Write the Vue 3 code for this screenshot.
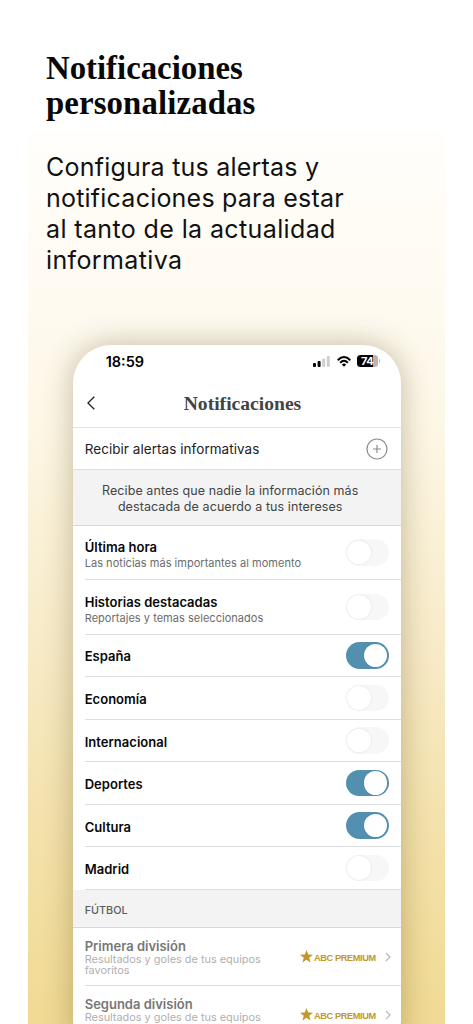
<script setup>
const topics = [
  { title: 'Última hora', sub: 'Las noticias más importantes al momento', on: false },
  { title: 'Historias destacadas', sub: 'Reportajes y temas seleccionados', on: false },
  { title: 'España', on: true },
  { title: 'Economía', on: false },
  { title: 'Internacional', on: false },
  { title: 'Deportes', on: true },
  { title: 'Cultura', on: true },
  { title: 'Madrid', on: false },
]
const leagues = ['Primera división', 'Segunda división']
</script>

<template>
  <main class="page">
    <section class="panel">
      <h1>Notificaciones<br><span class="second">personalizadas</span></h1>
      <p class="lead">Configura tus alertas y<br>notificaciones para estar<br><span class="wide">al tanto de la actualidad</span><br><span class="wide">informativa</span></p>

      <div class="phone">
        <div class="status">
          <span class="time">18:59</span>
          <svg class="signal" viewBox="0 0 17 11">
            <rect x="0" y="7" width="3" height="4" rx="1" fill="#000" />
            <rect x="4.6" y="5" width="3" height="6" rx="1" fill="#000" />
            <rect x="9.2" y="2.5" width="3" height="8.500" rx="1" fill="#cfcfcf" />
            <rect x="13.8" y="0" width="3" height="11" rx="1" fill="#cfcfcf" />
          </svg>
          <svg class="wifi" viewBox="0 0 14 11">
            <g fill="none" stroke="#000" stroke-width="1.9">
              <path d="M.7 4.200Q7-2 13.300 4.200" />
              <path d="M3.100 6.700Q7 3 10.900 6.700" />
            </g>
            <path d="M4.800 8.400Q7 6.600 9.200 8.400L7 10.700Z" />
          </svg>
          <div class="battery"><span>74</span></div>
          <i class="nub"></i>
        </div>

        <header class="bar">
          <svg class="back" viewBox="0 0 8 14"><path d="M7.300.8.9 7l6.400 6.200" /></svg>
          <h2>Notificaciones</h2>
        </header>

        <div class="receive">
          <span>Recibir alertas informativas</span>
          <svg class="plus" viewBox="0 0 22 22">
            <circle cx="11" cy="11" r="10" />
            <path d="M11 7v8M7 11h8" />
          </svg>
        </div>

        <p class="info">Recibe antes que nadie la información más<br>destacada de acuerdo a tus intereses</p>

        <div v-for="t in topics" :key="t.title" class="topic" :class="{ tall: t.sub }">
          <div>
            <div class="name">{{ t.title }}</div>
            <div v-if="t.sub" class="sub">{{ t.sub }}</div>
          </div>
          <span class="toggle" :class="{ on: t.on }"><i></i></span>
        </div>

        <div class="section">FÚTBOL</div>

        <div v-for="l in leagues" :key="l" class="league">
          <div class="text">
            <div class="lname">{{ l }}</div>
            <div class="lsub">Resultados y goles de tus equipos<br>favoritos</div>
          </div>
          <svg class="star" viewBox="0 0 24 24"><path d="M12 0l3.200 8.300 8.800.4-6.900 5.600 2.400 8.700L12 18.100 4.500 23l2.400-8.700L0 8.700l8.800-.4z" /></svg>
          <span class="premium">ABC PREMIUM</span>
          <svg class="go" viewBox="0 0 6 10"><path d="M1 1l4 4-4 4" /></svg>
        </div>
      </div>
    </section>
  </main>
</template>

<style>
body { background: #fff; }
</style>

<style scoped>
* { box-sizing: border-box; }
h1, h2, p { margin: 0; }
svg { display: block; flex: none; }
.page {
  width: 473px;
  height: 1024px;
  overflow: hidden;
  padding: 0 28px;
  background: #fff;
  font-family: Inter, "Liberation Sans", sans-serif;
}
.panel {
  height: 1024px;
  overflow: hidden;
  padding-top: 51px;
  background: linear-gradient(180deg, #fff 0, #fff 130px, #fffefb 131px, #fffbf3 270px, #fdf7e6 420px, #f8eccb 620px, #f4e2ac 820px, #f0da93 1024px);
}
h1 {
  margin-left: 18px;
  font: 700 32.800px/35px "Liberation Serif", serif;
  color: #080808;
}
.second { letter-spacing: .12px; }
.lead {
  margin: 31px 0 0 18px;
  font-size: 25px;
  line-height: 31px;
  letter-spacing: .22px;
  color: #111;
}
.wide { letter-spacing: .38px; }
.phone {
  width: 328px;
  height: 712px;
  margin: 68.500px 0 0 44.700px;
  border-radius: 38px;
  overflow: hidden;
  background: #fff;
  box-shadow: 0 0 30px rgba(70, 55, 10, .32);
}
.status {
  display: flex;
  align-items: center;
  height: 33px;
  padding-left: 33px;
}
.time { width: 207.500px; font-size: 14.500px; font-weight: 600; }
.signal { width: 17px; height: 11px; }
.wifi { width: 14px; height: 11px; margin-left: 6.500px; }
.battery {
  width: 21px;
  height: 12px;
  margin-left: 6px;
  border-radius: 3.500px;
  background: linear-gradient(90deg, #000 75%, #b5b5b5 75%);
  color: #fff;
  font-size: 11px;
  font-weight: 700;
  line-height: 12px;
  text-align: center;
  letter-spacing: -.3px;
}
.nub { width: 1.500px; height: 4px; margin-left: 1px; border-radius: 0 2px 2px 0; background: #b5b5b5; }
.bar {
  display: flex;
  align-items: center;
  height: 50.200px;
  padding: 2px 0 0 14.500px;
  border-bottom: 1px solid #e4e4e4;
}
.back { width: 8px; height: 14px; margin-top: -1px; fill: none; stroke: #222; stroke-width: 1.400; }
h2 {
  margin: 2px 0 0 88.500px;
  font: 700 19.600px/22px "Liberation Serif", serif;
  color: #444;
}
.receive {
  display: flex;
  align-items: center;
  justify-content: space-between;
  height: 42px;
  padding: 1px 13px 0 12px;
  border-bottom: 1px solid #dedede;
  font-size: 13.500px;
  letter-spacing: .05px;
  color: #222;
}
.plus { width: 22px; height: 22px; fill: none; stroke: #8c8c8c; stroke-width: 1.200; }
.info {
  height: 56px;
  padding: 13.200px 13px 0 0;
  border-bottom: 1px solid #d8d8d8;
  background: #f3f3f3;
  font-size: 12.500px;
  letter-spacing: .08px;
  line-height: 16px;
  text-align: center;
  color: #444;
}
.topic {
  display: flex;
  align-items: center;
  justify-content: space-between;
  height: 42.550px;
  margin-left: 12px;
  padding-right: 12px;
  border-bottom: 1px solid #dedede;
}
.tall { height: 54.500px; }
.name { padding-top: 2px; font-size: 13px; line-height: 16px; font-weight: 600; letter-spacing: .03px; color: #080808; }
.tall .name { padding-top: 6px; }
.sub { font-size: 11px; line-height: 16px; letter-spacing: .03px; color: #6b6b6b; }
.toggle {
  display: flex;
  width: 43px;
  height: 26.500px;
  padding: 1.500px;
  border-radius: 14px;
  background: #f7f7f7;
}
.toggle i {
  width: 23.500px;
  height: 23.500px;
  border-radius: 50%;
  background: #fff;
  box-shadow: 0 0 2px rgba(0, 0, 0, .12);
}
.toggle.on { justify-content: flex-end; background: #5390b0; }
.section {
  height: 38.500px;
  padding-left: 12px;
  border-bottom: 1px solid #d8d8d8;
  background: #f3f3f3;
  font-size: 10.800px;
  line-height: 41px;
  font-weight: 500;
  color: #5c5c5c;
}
.league {
  display: flex;
  align-items: center;
  height: 57.800px;
  margin-left: 12px;
  padding-right: 10px;
  border-bottom: 1px solid #dedede;
}
.text { width: 216.300px; }
.lname { font-size: 13px; line-height: 16px; font-weight: 600; color: #777; }
.lsub { font-size: 10.900px; line-height: 10.500px; color: #b0b0b0; }
.star { width: 13px; height: 13px; fill: #c1982b; }
.premium {
  width: 72px;
  padding: 3px 0 0 1px;
  font: 700 9.200px/11px "Liberation Sans", sans-serif;
  letter-spacing: -.38px;
  white-space: nowrap;
  color: #c1982b;
}
.go { width: 6px; height: 10px; fill: none; stroke: #b5b5b5; stroke-width: 1.100; }
</style>
